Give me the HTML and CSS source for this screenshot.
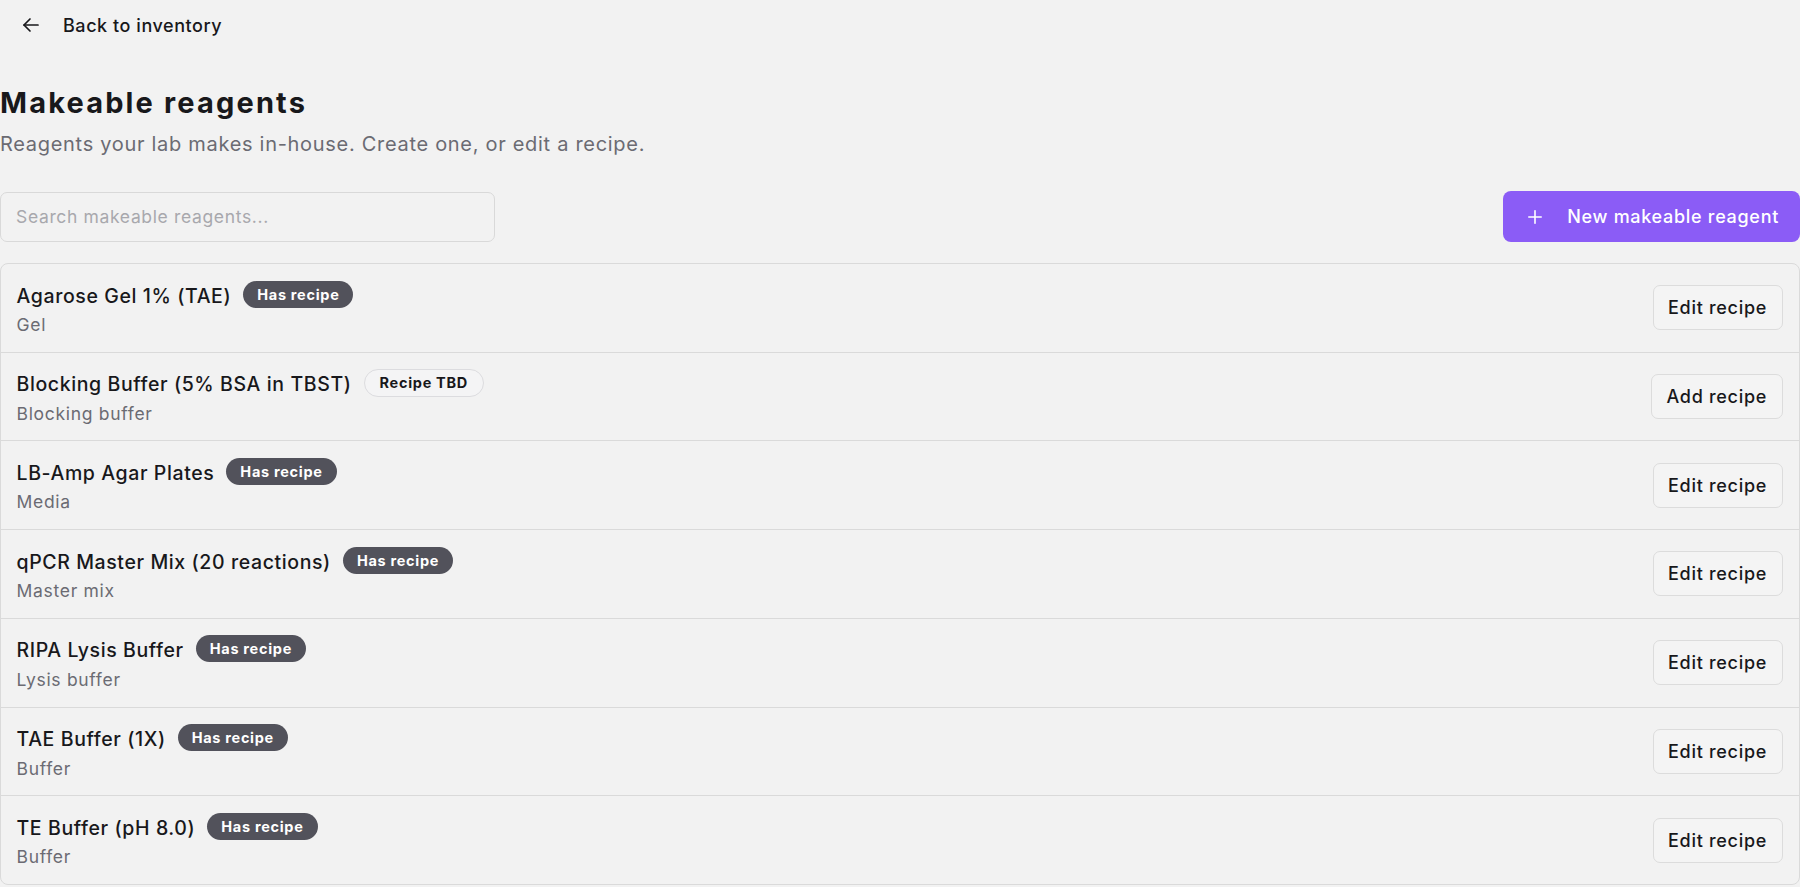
FILE: index.html
```html
<!DOCTYPE html>
<html lang="en">
<head>
<meta charset="utf-8">
<title>Makeable reagents</title>
<link rel="stylesheet" href="styles.css">
</head>
<body>
<div class="page">
  <a class="back-link" href="#">
    <svg class="back-icon" viewBox="0 0 24 24" width="24" height="24" fill="none" stroke="currentColor" stroke-width="1.7" stroke-linecap="round" stroke-linejoin="round"><path d="M19 12H5"/><path d="M11 18l-6-6 6-6"/></svg>
    <span>Back to inventory</span>
  </a>

  <header class="page-head">
    <h1 class="title">Makeable reagents</h1>
    <p class="subtitle">Reagents your lab makes in-house. Create one, or edit a recipe.</p>
  </header>

  <div class="toolbar">
    <input class="search" type="text" placeholder="Search makeable reagents...">
    <button class="btn-primary">
      <svg class="plus-icon" viewBox="0 0 14 14" width="14" height="14" fill="none" stroke="currentColor" stroke-width="1.6" stroke-linecap="round"><path d="M7 0.8v12.4"/><path d="M0.8 7h12.4"/></svg>
      <span>New makeable reagent</span>
    </button>
  </div>

  <ul class="list">
    <li class="row">
      <div class="info">
        <div class="name-line"><span class="name">Agarose Gel 1% (TAE)</span><span class="badge badge-dark">Has recipe</span></div>
        <div class="kind">Gel</div>
      </div>
      <button class="btn-outline">Edit recipe</button>
    </li>
    <li class="row">
      <div class="info">
        <div class="name-line"><span class="name">Blocking Buffer (5% BSA in TBST)</span><span class="badge badge-light">Recipe TBD</span></div>
        <div class="kind">Blocking buffer</div>
      </div>
      <button class="btn-outline">Add recipe</button>
    </li>
    <li class="row">
      <div class="info">
        <div class="name-line"><span class="name">LB-Amp Agar Plates</span><span class="badge badge-dark">Has recipe</span></div>
        <div class="kind">Media</div>
      </div>
      <button class="btn-outline">Edit recipe</button>
    </li>
    <li class="row">
      <div class="info">
        <div class="name-line"><span class="name">qPCR Master Mix (20 reactions)</span><span class="badge badge-dark">Has recipe</span></div>
        <div class="kind">Master mix</div>
      </div>
      <button class="btn-outline">Edit recipe</button>
    </li>
    <li class="row">
      <div class="info">
        <div class="name-line"><span class="name">RIPA Lysis Buffer</span><span class="badge badge-dark">Has recipe</span></div>
        <div class="kind">Lysis buffer</div>
      </div>
      <button class="btn-outline">Edit recipe</button>
    </li>
    <li class="row">
      <div class="info">
        <div class="name-line"><span class="name">TAE Buffer (1X)</span><span class="badge badge-dark">Has recipe</span></div>
        <div class="kind">Buffer</div>
      </div>
      <button class="btn-outline">Edit recipe</button>
    </li>
    <li class="row">
      <div class="info">
        <div class="name-line"><span class="name">TE Buffer (pH 8.0)</span><span class="badge badge-dark">Has recipe</span></div>
        <div class="kind">Buffer</div>
      </div>
      <button class="btn-outline">Edit recipe</button>
    </li>
  </ul>
</div>
</body>
</html>
```

FILE: styles.css
```css
* { box-sizing: border-box; }
html, body { margin: 0; padding: 0; }
body {
  background: #f2f2f2;
  color: #18181b;
  font-family: Inter, "Liberation Sans", sans-serif;
}
.page { display: flex; flex-direction: column; }

.back-link {
  display: inline-flex;
  align-items: center;
  gap: 20px;
  align-self: flex-start;
  height: 50px;
  padding: 0 16px 0 19px;
  color: #18181b;
  text-decoration: none;
  font-size: 18px;
  font-weight: 500;
  letter-spacing: 0.55px;
}
.back-icon { flex: none; }

.page-head { margin-top: 34.5px; }
.title {
  margin: 0;
  font-size: 29px;
  line-height: 36px;
  font-weight: 700;
  letter-spacing: 2.15px;
  color: #18181b;
}
.subtitle {
  margin: 9.5px 0 0;
  font-size: 20px;
  line-height: 28px;
  letter-spacing: 0.7px;
  color: #6b6b73;
}

.toolbar {
  display: flex;
  justify-content: space-between;
  align-items: center;
  margin-top: 33px;
}
.search {
  width: 495px;
  height: 50px;
  border: 1.5px solid #d9d9d9;
  border-radius: 7px;
  background: #f2f2f2;
  padding: 0 15px;
  font-family: inherit;
  font-size: 17.5px;
  letter-spacing: 0.65px;
  color: #18181b;
  outline: none;
}
.search::placeholder { color: #a8a8ad; }

.btn-primary {
  display: inline-flex;
  align-items: center;
  gap: 25px;
  height: 51px;
  padding: 0 21px 0 25px;
  border: none;
  border-radius: 8px;
  background: #8b5cf6;
  color: #fff;
  font-family: inherit;
  font-size: 18px;
  font-weight: 500;
  letter-spacing: 0.7px;
}
.plus-icon { flex: none; }

.list {
  list-style: none;
  margin: 21px 0 0;
  padding: 0;
  border: 1.5px solid #dadada;
  border-radius: 8px;
}
.row {
  display: flex;
  align-items: center;
  justify-content: space-between;
  height: 88.75px;
  padding: 0 16.5px 0 15.5px;
  border-top: 1.5px solid #dadada;
}
.row:first-child { border-top: none; height: 87.5px; }

.info { display: flex; flex-direction: column; margin-top: 2px; }
.name-line { display: flex; align-items: center; gap: 12px; }
.name {
  font-size: 19.5px;
  line-height: 28px;
  font-weight: 500;
  letter-spacing: 0.6px;
  color: #18181b;
}
.kind {
  font-size: 17.5px;
  line-height: 24px;
  letter-spacing: 0.7px;
  color: #6b6b73;
  margin-top: 2.5px;
}

.badge {
  display: inline-flex;
  align-items: center;
  height: 27px;
  margin-bottom: 3px;
  padding: 0 14px;
  border-radius: 999px;
  font-size: 14.5px;
  font-weight: 700;
  letter-spacing: 0.7px;
}
.badge-dark { background: #52525b; color: #fff; }
.badge-light {
  height: 28px;
  padding: 0 15px;
  background: #f4f4f5;
  color: #18181b;
  border: 1.5px solid #dcdcdf;
}

.btn-outline {
  height: 45px;
  padding: 0 14.5px;
  border: 1.5px solid #dcdcdc;
  border-radius: 7px;
  background: #f4f4f4;
  color: #18181b;
  font-family: inherit;
  font-size: 18px;
  font-weight: 500;
  letter-spacing: 0.7px;
}
```
